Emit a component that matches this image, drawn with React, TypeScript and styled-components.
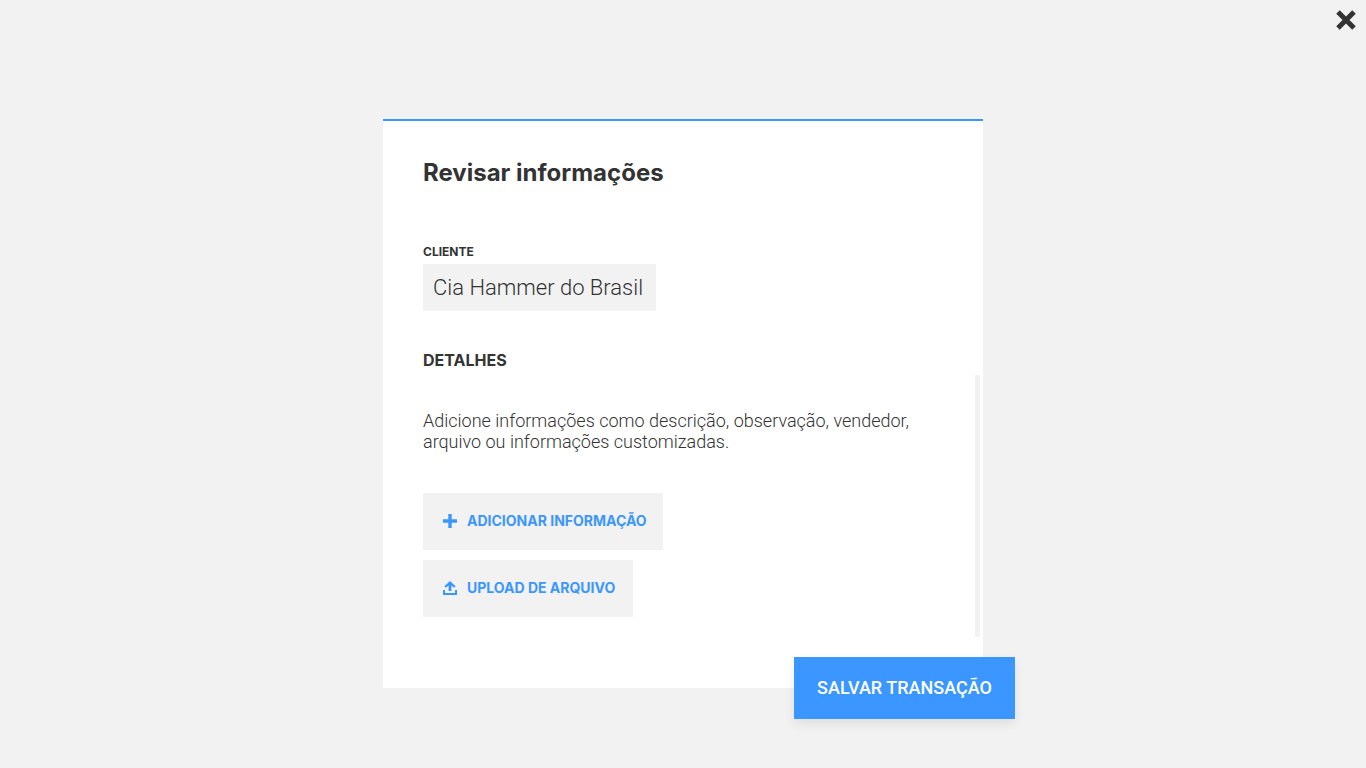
import React from "react";
import styled, { createGlobalStyle } from "styled-components";

const ink = "#333333";
const blue = "#3b97ff";
const grey = "#f2f2f2";
const strongFont = 'Inter, "Liberation Sans", sans-serif';

const GlobalStyle = createGlobalStyle`
  *, *::before, *::after { box-sizing: border-box; }
  body {
    margin: 0;
    background: ${grey};
    color: ${ink};
    font-family: Roboto, "Liberation Sans", sans-serif;
  }
  button, input { font-family: inherit; }
`;

const Page = styled.div`
  min-height: 100vh;
  display: flex;
  flex-direction: column;
`;

const TopBar = styled.header`
  display: flex;
  justify-content: flex-end;
  padding: 10px 10px 9px;
`;

const CloseButton = styled.button`
  display: flex;
  padding: 0;
  border: 0;
  background: none;
  color: ${ink};
  cursor: pointer;
`;

const Stage = styled.main`
  flex: 1;
  display: flex;
  align-items: center;
  justify-content: center;
`;

const Card = styled.form`
  position: relative;
  width: 100%;
  max-width: 600px;
  padding: 38px 0 51px;
  border-top: 2px solid ${blue};
  background: #ffffff;
`;

const CardHead = styled.div`
  display: flex;
  flex-direction: column;
  align-items: flex-start;
  padding: 0 40px;
`;

const Title = styled.h1`
  margin: 0 0 58px;
  font-family: ${strongFont};
  font-size: 24px;
  line-height: 28px;
  font-weight: 700;
`;

const FieldLabel = styled.label`
  margin-bottom: 5px;
  font-family: ${strongFont};
  font-size: 12px;
  line-height: 14px;
  font-weight: 700;
  text-transform: uppercase;
`;

const FieldInput = styled.input`
  width: 233px;
  height: 47px;
  margin-bottom: 39px;
  padding: 0 10px 1px;
  border: 0;
  border-radius: 0;
  background: ${grey};
  color: ${ink};
  font-size: 22px;
  font-weight: 300;
`;

const SectionTitle = styled.h2`
  margin: 0 0 5px;
  font-family: ${strongFont};
  font-size: 16px;
  line-height: 20px;
  font-weight: 700;
  text-transform: uppercase;
`;

const Details = styled.section`
  display: grid;
  grid-template-columns: 1fr 5px;
  padding-right: 3px;
`;

const DetailsBody = styled.div`
  padding: 35px 32px 20px 40px;
`;

const ScrollTrack = styled.div`
  background: ${grey};
`;

const Hint = styled.p`
  margin: 0 0 41px;
  font-size: 18px;
  line-height: 21px;
  font-weight: 300;
`;

const Actions = styled.div`
  display: flex;
  flex-direction: column;
  align-items: flex-start;
  gap: 10px;
`;

const ActionButton = styled.button<{ $width: number }>`
  display: flex;
  align-items: center;
  gap: 10px;
  width: ${({ $width }) => $width}px;
  height: 57px;
  padding: 0 10px 2px 20px;
  border: 0;
  background: ${grey};
  color: ${blue};
  font-family: ${strongFont};
  font-size: 14px;
  font-weight: 700;
  text-transform: uppercase;
  white-space: nowrap;
  cursor: pointer;

  svg {
    flex: none;
  }
`;

const SaveButton = styled.button`
  position: absolute;
  right: -32px;
  bottom: -31px;
  width: 221px;
  height: 62px;
  padding: 0 0 1px;
  border: 0;
  background: ${blue};
  color: #ffffff;
  box-shadow: 0 5px 10px rgba(0, 0, 0, 0.08);
  font-size: 18px;
  font-weight: 500;
  text-transform: uppercase;
  white-space: nowrap;
  cursor: pointer;
`;

const CloseIcon = () => (
  <svg width="20" height="20" viewBox="0 0 20 20" aria-hidden="true">
    <path d="M2 2L18 18M18 2L2 18" stroke="currentColor" strokeWidth="5" />
  </svg>
);

const PlusIcon = () => (
  <svg width="14" height="14" viewBox="0 0 14 14" aria-hidden="true">
    <path d="M5.3 0h3.400v5.300H14v3.400H8.700V14H5.300V8.700H0V5.300h5.300z" fill="currentColor" />
  </svg>
);

const UploadIcon = () => (
  <svg width="14" height="14" viewBox="0 0 14 14" aria-hidden="true">
    <path d="M7 0L12.600 5.300L11.200 6.700L8.400 4.600V10H5.600V4.600L2.800 6.700L1.400 5.300Z" fill="currentColor" />
    <path d="M0 9H2V12H12V9H14V14H0Z" fill="currentColor" />
  </svg>
);

export default function App() {
  return (
    <Page>
      <GlobalStyle />
      <TopBar>
        <CloseButton type="button" aria-label="Fechar">
          <CloseIcon />
        </CloseButton>
      </TopBar>
      <Stage>
        <Card onSubmit={(event) => event.preventDefault()}>
          <CardHead>
            <Title>Revisar informações</Title>
            <FieldLabel htmlFor="cliente">Cliente</FieldLabel>
            <FieldInput id="cliente" type="text" defaultValue="Cia Hammer do Brasil" />
            <SectionTitle>Detalhes</SectionTitle>
          </CardHead>
          <Details>
            <DetailsBody>
              <Hint>
                Adicione informações como descrição, observação, vendedor, arquivo ou informações
                customizadas.
              </Hint>
              <Actions>
                <ActionButton type="button" $width={240}>
                  <PlusIcon />
                  Adicionar informação
                </ActionButton>
                <ActionButton type="button" $width={210}>
                  <UploadIcon />
                  Upload de arquivo
                </ActionButton>
              </Actions>
            </DetailsBody>
            <ScrollTrack />
          </Details>
          <SaveButton type="submit">Salvar transação</SaveButton>
        </Card>
      </Stage>
    </Page>
  );
}
